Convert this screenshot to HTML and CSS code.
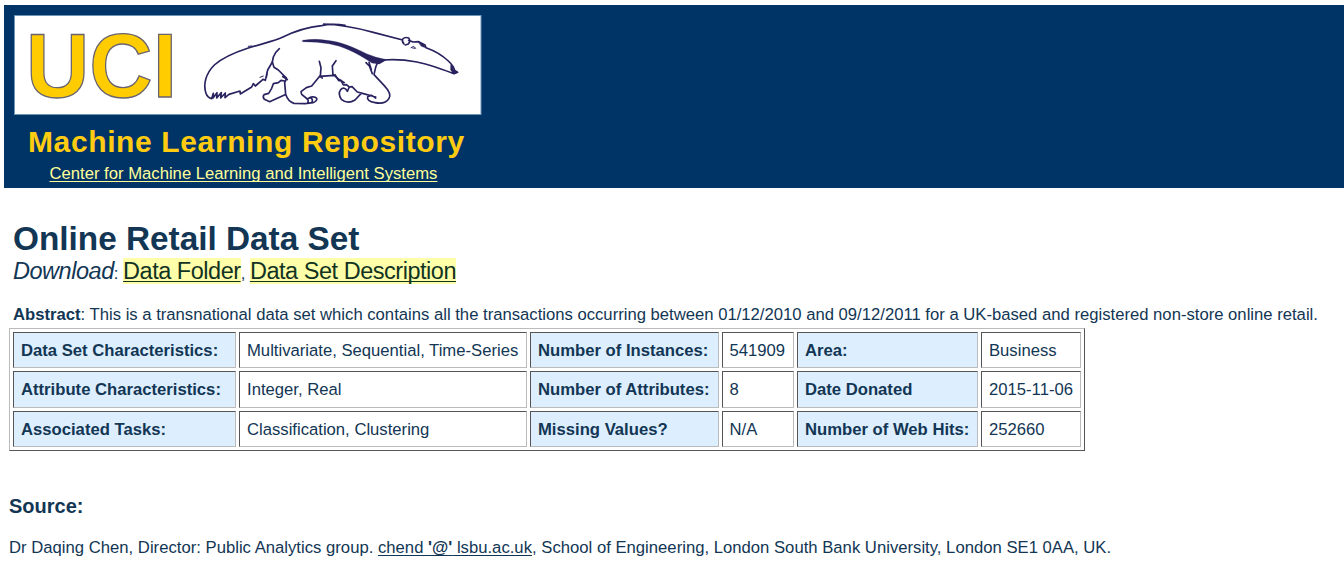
FILE: index.html
```html
<!DOCTYPE html>
<html lang="en">
<head>
<meta charset="utf-8">
<title>Online Retail Data Set</title>
<link rel="stylesheet" href="styles.css">
</head>
<body>
<header class="banner">
  <svg class="logo" viewBox="14 15 468 100" role="img" aria-label="UCI">
    <rect class="logo-bg" x="14.5" y="15.5" width="466.5" height="99"/>
    <text class="uci" x="26" y="97" textLength="151" lengthAdjust="spacingAndGlyphs">UCI</text>
    <g class="ink" transform="translate(195 15) scale(.33333)">
      <path d="M450 31C430 27 405 26 380 32C340 36 300 48 262 67C240 78 200 86 160 99C120 112 80 130 58 150C32 176 24 208 33 235Q38 248 50 251L55 235L54 249L66 233L65 249L79 233L77 249L91 234L90 248L102 238L135 228L136 237L170 216L175 206L181 213L204 193L211 196L218 165L232 141L235 126Q242 110 253 101"/>
      <path d="M232 141L237 157L250 165L275 190L269 203L272 238Q279 260 297 265L330 266L354 263Q368 257 365 250Q361 244 348 246L337 252L320 238L318 230L334 218L350 213L374 184L418 181L431 193L448 203M269 198L258 196L250 203L235 206L230 220L221 235L207 239Q202 245 208 253L224 260L270 239M376 184L378 158L373 139M414 181L412 153L423 137M336 252Q343 256 337 265M346 248Q355 252 351 261M263 185L277 194M374 183L382 189"/>
      <path class="fine" d="M160 94L170 93M386 29L411 29M195 187L205 183M218 165L215 187"/>
    </g>
    <g class="ink" transform="translate(335 15) scale(.33333)">
      <path d="M-34 27Q30 29 115 52L203 75M207 87Q200 80 203 72Q210 65 221 69Q228 77 220 87L211 90M221 76L234 81L251 80L270 90L273 98Q313 112 340 138Q356 153 359 166L368 172L357 176C324 164 281 148 246 141C213 135 173 133 147 135L126 146L122 157L117 179L147 211Q171 236 162 250Q151 269 120 263Q94 258 98 245L110 241L122 249M93 143L103 153L112 176M102 142L109 164M0 179L11 197L18 196L25 210L34 209L43 216L51 215L67 231L85 236L122 246M78 236L60 255Q38 269 19 253Q8 236 17 224Q28 213 37 229L43 216M349 148L349 164L357 175"/>
      <path class="fine" d="M228 98L236 94L242 100L233 99"/>
      <path class="solid" d="M-97 76Q-60 70 -25 76C17 80 60 99 96 117Q124 129 155 134L133 147L111 144Q71 117 40 104Q-8 80 -97 80ZM249 80L267 88L271 98L259 94ZM350 150L357 165L369 171L359 176L348 166Z"/>
    </g>
  </svg>
  <div class="site-name"><span>Machine Learning Repository</span></div>
  <div class="center-link"><a href="#">Center for Machine Learning and Intelligent Systems</a></div>
</header>
<main class="content">
  <h1>Online Retail Data Set</h1>
  <p class="download"><i>Download</i>: <a href="#">Data Folder</a>, <a href="#">Data Set Description</a></p>
  <p class="abstract"><b>Abstract</b>: This is a transnational data set which contains all the transactions occurring between 01/12/2010 and 09/12/2011 for a UK-based and registered non-store online retail.</p>
  <table class="facts">
    <colgroup><col class="c1"><col class="c2"><col class="c3"><col class="c4"><col class="c5"><col class="c6"></colgroup>
    <tr><th>Data Set Characteristics:</th><td>Multivariate, Sequential, Time-Series</td><th>Number of Instances:</th><td>541909</td><th>Area:</th><td>Business</td></tr>
    <tr><th>Attribute Characteristics:</th><td>Integer, Real</td><th>Number of Attributes:</th><td>8</td><th>Date Donated</th><td>2015-11-06</td></tr>
    <tr><th>Associated Tasks:</th><td>Classification, Clustering</td><th>Missing Values?</th><td>N/A</td><th>Number of Web Hits:</th><td>252660</td></tr>
  </table>
  <h2>Source:</h2>
  <p class="source">Dr Daqing Chen, Director: Public Analytics group. <a href="#">chend <b>'@'</b> lsbu.ac.uk</a>, School of Engineering, London South Bank University, London SE1 0AA, UK.</p>
</main>
</body>
</html>
```
FILE: styles.css
```css
* { box-sizing: border-box; }
body {
  margin: 0;
  background: #fff;
  color: #123654;
  font: 16.67px/20px "Liberation Sans", Arial, sans-serif;
  white-space: nowrap;
  overflow: hidden;
}
h1, h2, p { margin: 0; }
a {
  color: inherit;
  text-underline-offset: 2px;
  text-decoration-thickness: 1px;
  text-decoration-skip-ink: none;
}
.banner {
  margin: 5px 0 0 4px;
  height: 183px;
  padding: 10px 0 0 10px;
  background: #003366;
}
.logo { display: block; width: 468px; height: 100px; }
.logo-bg { fill: #fff; stroke: #6f93b5; }
.uci {
  font: bold 90px "Liberation Sans", Arial, sans-serif;
  fill: #ffcc00;
  stroke: #6a6470;
  stroke-width: 1.3;
}
.ink { fill: none; stroke: #28225f; stroke-width: 5; stroke-linejoin: round; stroke-linecap: round; }
.fine { stroke-width: 3; }
.solid { fill: #28225f; stroke-width: 1; }
.site-name {
  padding: 9px 0 0 14px;
  font-size: 30px;
  line-height: 36px;
  font-weight: bold;
  letter-spacing: .62px;
  color: #ffcc11;
}
.center-link { padding-left: 35.5px; line-height: 28px; color: #ffff99; }
.content { padding: 32px 0 0 9px; }
h1 { padding-left: 4px; font-size: 33.33px; line-height: 38px; }
.download { padding-left: 4px; line-height: 27px; }
.download i, .download a { font-size: 23.5px; letter-spacing: -.47px; }
.download a { background: #ffffaa; color: #123322; }
.abstract { padding: 18px 0 3px 4px; }
.facts {
  table-layout: fixed;
  width: 1076px;
  height: 123px;
  border: 1px solid;
  border-color: #bbb #555 #555 #bbb;
  border-collapse: separate;
  border-spacing: 3px;
}
.facts th, .facts td {
  padding: 2px 7px 0;
  border: 1px solid;
  border-color: #555 #bbb #bbb #555;
  text-align: left;
}
.facts th { background: #ddeeff; }
.c1 { width: 223px; }
.c2 { width: 288px; }
.c3 { width: 188.5px; }
.c4 { width: 72.5px; }
.c5 { width: 181px; }
h2 { padding-top: 43px; font-size: 20px; line-height: 24px; }
.source { padding-top: 20px; letter-spacing: .01px; }
```
